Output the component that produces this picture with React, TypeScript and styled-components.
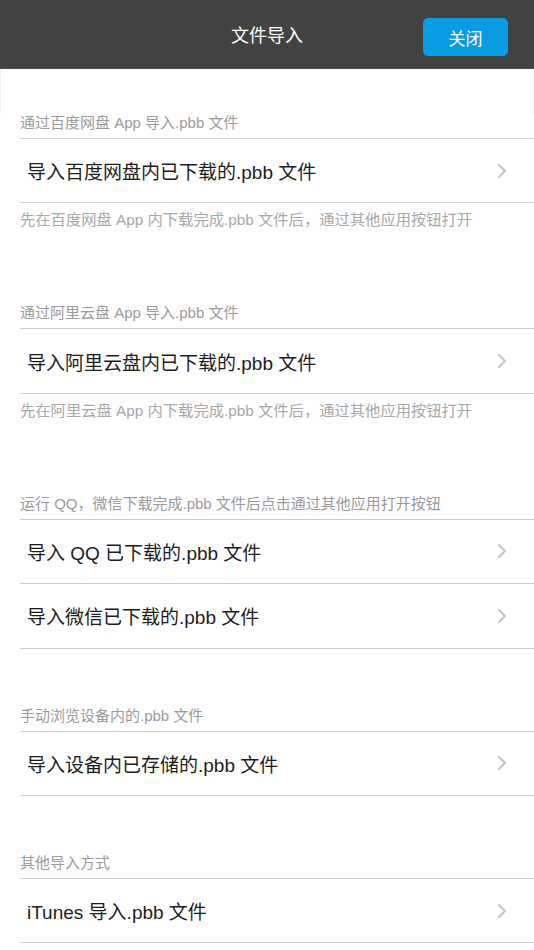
import styled, { createGlobalStyle } from 'styled-components';

type Row = { title: string };
type Section = { header: string; rows: Row[]; footer?: string };

const sections: Section[] = [
  {
    header: '通过百度网盘 App 导入.pbb 文件',
    rows: [{ title: '导入百度网盘内已下载的.pbb 文件' }],
    footer: '先在百度网盘 App 内下载完成.pbb 文件后，通过其他应用按钮打开',
  },
  {
    header: '通过阿里云盘 App 导入.pbb 文件',
    rows: [{ title: '导入阿里云盘内已下载的.pbb 文件' }],
    footer: '先在阿里云盘 App 内下载完成.pbb 文件后，通过其他应用按钮打开',
  },
  {
    header: '运行 QQ，微信下载完成.pbb 文件后点击通过其他应用打开按钮',
    rows: [{ title: '导入 QQ 已下载的.pbb 文件' }, { title: '导入微信已下载的.pbb 文件' }],
  },
  {
    header: '手动浏览设备内的.pbb 文件',
    rows: [{ title: '导入设备内已存储的.pbb 文件' }],
  },
  {
    header: '其他导入方式',
    rows: [{ title: 'iTunes 导入.pbb 文件' }],
  },
];

const Chevron = () => (
  <svg width="10" height="16" viewBox="0 0 10 16" fill="none">
    <path
      d="M2 2L8 8L2 14"
      stroke="#c4c4c8"
      strokeWidth="2"
      strokeLinecap="round"
      strokeLinejoin="round"
    />
  </svg>
);

const App = () => {
  return (
    <>
      <GlobalStyle />
      <Page>
        <NavBar>
          <NavTitle>文件导入</NavTitle>
          <CloseButton>关闭</CloseButton>
        </NavBar>
        <TopSpacer />
        {sections.map((section, index) => (
          <Group key={index}>
            <GroupHeader>{section.header}</GroupHeader>
            <List>
              {section.rows.map((row, i) => (
                <Cell key={i}>
                  <CellTitle>{row.title}</CellTitle>
                  <Chevron />
                </Cell>
              ))}
            </List>
            {section.footer && <GroupFooter>{section.footer}</GroupFooter>}
          </Group>
        ))}
      </Page>
    </>
  );
};

const GlobalStyle = createGlobalStyle`
  * {
    box-sizing: border-box;
  }
  body {
    margin: 0;
    background: #ffffff;
    font-family: "Liberation Sans", "Noto Sans CJK SC", sans-serif;
  }
`;

const Page = styled.div`
  width: 534px;
  min-height: 950px;
  background: #ffffff;
  overflow: hidden;
`;

const NavBar = styled.header`
  position: relative;
  height: 69px;
  background: #424242;
  border-bottom: 1px solid #4e4e4e;
  display: flex;
  align-items: center;
  justify-content: center;
`;

const NavTitle = styled.h1`
  margin: 0;
  font-size: 18px;
  font-weight: 400;
  color: #ffffff;
`;

const CloseButton = styled.button`
  position: absolute;
  right: 26px;
  top: 18px;
  width: 85px;
  height: 38px;
  border: none;
  border-radius: 5px;
  background: #0a9be5;
  color: #ffffff;
  font-family: inherit;
  font-size: 17px;
  cursor: pointer;
`;

const TopSpacer = styled.div`
  height: 44px;
  border-left: 1px solid #f0f0f0;
  border-right: 1px solid #f0f0f0;
`;

const Group = styled.section`
  & + & {
    margin-top: 57px;
  }
`;

const GroupHeader = styled.div`
  padding: 0 20px 5px;
  line-height: 20px;
  font-size: 15px;
  color: #9b9b9b;
  white-space: nowrap;
`;

const List = styled.ul`
  list-style: none;
  margin: 0 0 0 20px;
  padding: 0;
  border-top: 1px solid #cfcfcf;
`;

const Cell = styled.li`
  height: 64.4px;
  display: flex;
  align-items: center;
  justify-content: space-between;
  padding: 0 27px 0 7px;
  border-bottom: 1px solid #cfcfcf;
`;

const CellTitle = styled.span`
  font-size: 19px;
  color: #1c1c1c;
`;

const GroupFooter = styled.div`
  padding: 7px 20px 16px;
  line-height: 20px;
  font-size: 15.3px;
  color: #a8a8a8;
  white-space: nowrap;
`;

export default App;
